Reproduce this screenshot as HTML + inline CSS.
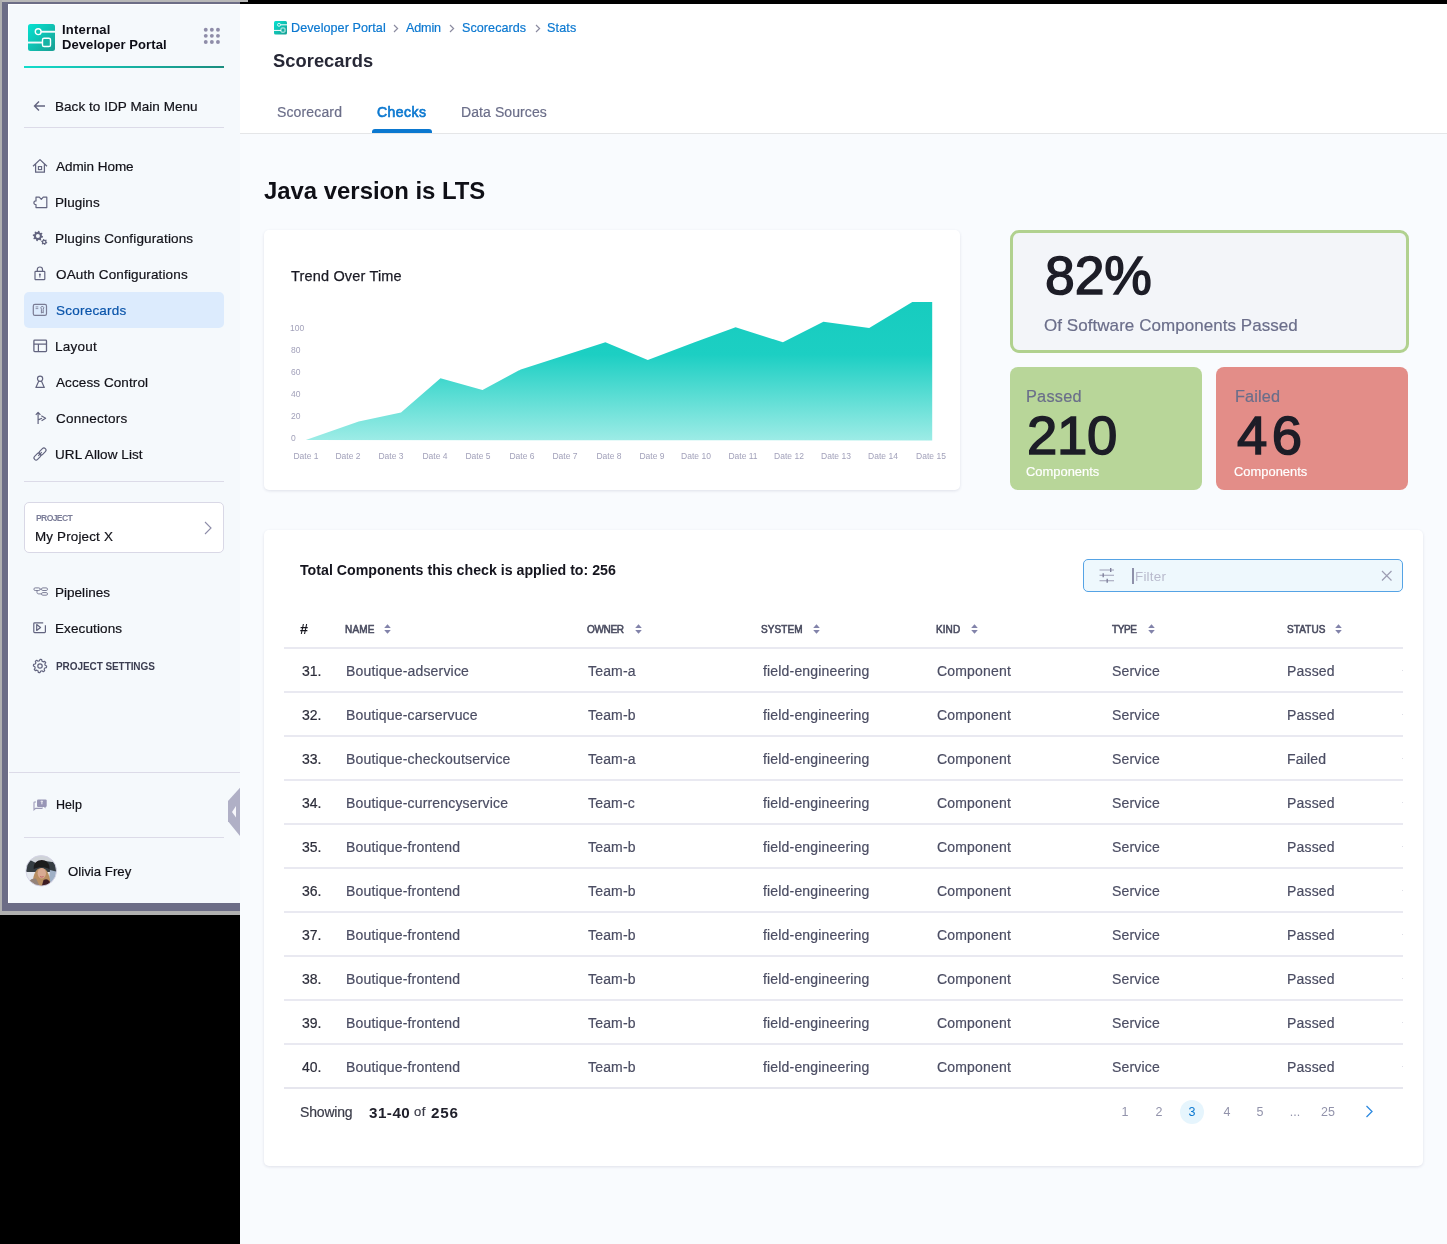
<!DOCTYPE html>
<html><head><meta charset="utf-8"><style>
html,body{margin:0;padding:0}
body{width:1447px;height:1244px;position:relative;overflow:hidden;background:#000;font-family:"Liberation Sans", sans-serif}
.t{position:absolute;white-space:nowrap;will-change:transform}
svg{overflow:visible}
</style></head><body>
<div style="position:absolute;left:0;top:0;width:248px;height:2px;background:#b8b8b8"></div>
<div style="position:absolute;left:0;top:0;width:2px;height:915px;background:#b0b0b0"></div>
<div style="position:absolute;left:2px;top:2px;width:238px;height:909px;background:#6c6d86"></div>
<div style="position:absolute;left:0px;top:911px;width:240px;height:4px;background:#b0b0b0"></div>
<div style="position:absolute;left:8px;top:4px;width:232px;height:899px;background:#ffffff"></div>
<div style="position:absolute;left:9px;top:5px;width:231px;height:898px;background:#f5f9fc"></div>
<div style="position:absolute;left:240px;top:4px;width:1207px;height:1240px;background:#f9fbfe"></div>
<div style="position:absolute;left:240px;top:4px;width:1207px;height:129px;background:#ffffff"></div>
<div style="position:absolute;left:240px;top:133px;width:1207px;height:1px;background:#e5e6e8"></div>
<svg style="position:absolute;left:28px;top:24px" width="27" height="27" viewBox="0 0 27 27"><defs><linearGradient id="lg" x1="0" y1="0" x2="1" y2="1"><stop offset="0" stop-color="#05e3d2"/><stop offset="1" stop-color="#1a9e92"/></linearGradient></defs>
<rect x="0" y="0" width="27" height="27" rx="2.5" fill="url(#lg)"/>
<rect x="10" y="6.8" width="17" height="1.9" fill="#f5f9fc"/>
<rect x="0" y="17.6" width="16" height="1.9" fill="#f5f9fc"/>
<circle cx="10.2" cy="7.7" r="2.9" fill="#12c9b9" stroke="#fff" stroke-width="1.4"/>
<rect x="14.5" y="14.2" width="8" height="8.3" rx="1.6" fill="#17b3a5" stroke="#fff" stroke-width="1.4"/></svg>
<div class="t" style="left:61.63px;top:23.39px;font-size:13px;line-height:13px;color:#0d0d16;font-weight:700;letter-spacing:0.2px;">Internal</div>
<div class="t" style="left:61.63px;top:37.59px;font-size:13px;line-height:13px;color:#0d0d16;font-weight:700;letter-spacing:0.085px;">Developer Portal</div>
<svg style="position:absolute;left:204px;top:28px" width="16" height="16" viewBox="0 0 16 16"><circle cx="1.75" cy="1.75" r="1.95" fill="#8f8da9"/><circle cx="1.75" cy="7.85" r="1.95" fill="#8f8da9"/><circle cx="1.75" cy="13.95" r="1.95" fill="#8f8da9"/><circle cx="7.85" cy="1.75" r="1.95" fill="#8f8da9"/><circle cx="7.85" cy="7.85" r="1.95" fill="#8f8da9"/><circle cx="7.85" cy="13.95" r="1.95" fill="#8f8da9"/><circle cx="13.95" cy="1.75" r="1.95" fill="#8f8da9"/><circle cx="13.95" cy="7.85" r="1.95" fill="#8f8da9"/><circle cx="13.95" cy="13.95" r="1.95" fill="#8f8da9"/></svg>
<svg style="position:absolute;left:24px;top:66px" width="200" height="2" viewBox="0 0 200 2"><defs><linearGradient id="tl"><stop offset="0" stop-color="#12dccb"/><stop offset="1" stop-color="#1b8d7f"/></linearGradient></defs><rect width="200" height="2" fill="url(#tl)"/></svg>
<svg style="position:absolute;left:33px;top:100px" width="13" height="12" viewBox="0 0 13 12"><path d="M6 1.5 L1.5 6 L6 10.5 M1.5 6 H12" fill="none" stroke="#62647f" stroke-width="1.4"/></svg>
<div class="t" style="left:55.39px;top:100.07px;font-size:13.5px;line-height:13.5px;color:#111118;font-weight:400;letter-spacing:0.053px;;-webkit-text-stroke:0.2px #111118">Back to IDP Main Menu</div>
<div style="position:absolute;left:24px;top:127px;width:200px;height:1px;background:#dcdbe8"></div>
<div style="position:absolute;left:24px;top:292px;width:200px;height:36px;background:#dcebfd;border-radius:5px"></div>
<div class="t" style="left:56.47px;top:159.87px;font-size:13.5px;line-height:13.5px;color:#111118;font-weight:400;letter-spacing:-0.047px;;-webkit-text-stroke:0.2px #111118">Admin Home</div>
<div class="t" style="left:55.39px;top:195.87px;font-size:13.5px;line-height:13.5px;color:#111118;font-weight:400;letter-spacing:0.068px;;-webkit-text-stroke:0.2px #111118">Plugins</div>
<div class="t" style="left:55.39px;top:231.87px;font-size:13.5px;line-height:13.5px;color:#111118;font-weight:400;letter-spacing:0.143px;;-webkit-text-stroke:0.2px #111118">Plugins Configurations</div>
<div class="t" style="left:55.86px;top:267.87px;font-size:13.5px;line-height:13.5px;color:#111118;font-weight:400;letter-spacing:0.136px;;-webkit-text-stroke:0.2px #111118">OAuth Configurations</div>
<div class="t" style="left:55.89px;top:303.87px;font-size:13.5px;line-height:13.5px;color:#0a54aa;font-weight:400;letter-spacing:0.224px;;-webkit-text-stroke:0.2px #0a54aa">Scorecards</div>
<div class="t" style="left:55.39px;top:339.87px;font-size:13.5px;line-height:13.5px;color:#111118;font-weight:400;letter-spacing:0.231px;;-webkit-text-stroke:0.2px #111118">Layout</div>
<div class="t" style="left:56.47px;top:375.87px;font-size:13.5px;line-height:13.5px;color:#111118;font-weight:400;letter-spacing:0.094px;;-webkit-text-stroke:0.2px #111118">Access Control</div>
<div class="t" style="left:55.81px;top:411.87px;font-size:13.5px;line-height:13.5px;color:#111118;font-weight:400;letter-spacing:0.237px;;-webkit-text-stroke:0.2px #111118">Connectors</div>
<div class="t" style="left:55.46px;top:447.87px;font-size:13.5px;line-height:13.5px;color:#111118;font-weight:400;letter-spacing:0.084px;;-webkit-text-stroke:0.2px #111118">URL Allow List</div>
<svg style="position:absolute;left:32px;top:158px" width="16" height="16" viewBox="0 0 16 16"><path d="M1 8.2 L8 1.6 L15 8.2 M3.6 6.2 V14.2 H12.4 V6.2" fill="none" stroke="#62647f" stroke-width="1.25" stroke-linejoin="round"/><rect x="6.4" y="8.6" width="3.2" height="3" fill="none" stroke="#62647f" stroke-width="1.1"/></svg>
<svg style="position:absolute;left:33px;top:196px" width="15" height="13" viewBox="0 0 15 13"><path d="M3 1.2 H6.3 L8.3 3.3 L10.2 1.2 H13.8 V11.6 H3 V8.7 C1.6 8.7 0.9 7.9 0.9 6.8 C0.9 5.7 1.6 4.9 3 4.9 Z" fill="none" stroke="#62647f" stroke-width="1.2" stroke-linejoin="round"/></svg>
<svg style="position:absolute;left:32px;top:230px" width="16" height="16" viewBox="0 0 16 16"><polygon points="11.07,6.51 10.88,7.51 9.34,7.84 8.91,8.47 9.20,10.02 8.35,10.59 7.03,9.73 6.28,9.88 5.39,11.17 4.39,10.98 4.06,9.44 3.43,9.01 1.88,9.30 1.31,8.45 2.17,7.13 2.02,6.38 0.73,5.49 0.92,4.49 2.46,4.16 2.89,3.53 2.60,1.98 3.45,1.41 4.77,2.27 5.52,2.12 6.41,0.83 7.41,1.02 7.74,2.56 8.37,2.99 9.92,2.70 10.49,3.55 9.63,4.87 9.78,5.62" fill="#62647f"/><circle cx="5.9" cy="6" r="2.0" fill="#f5f9fc"/><polygon points="15.27,12.40 15.06,13.19 14.02,13.40 13.60,13.82 13.39,14.86 12.60,15.07 11.90,14.28 11.32,14.12 10.31,14.46 9.74,13.89 10.08,12.88 9.92,12.30 9.13,11.60 9.34,10.81 10.38,10.60 10.80,10.18 11.01,9.14 11.80,8.93 12.50,9.72 13.08,9.88 14.09,9.54 14.66,10.11 14.32,11.12 14.48,11.70" fill="#62647f"/><circle cx="12.2" cy="12" r="1.1" fill="#f5f9fc"/></svg>
<svg style="position:absolute;left:34px;top:266px" width="12" height="15" viewBox="0 0 12 15"><rect x="1" y="5.3" width="9.8" height="8.4" rx="0.8" fill="none" stroke="#62647f" stroke-width="1.2"/><path d="M3.3 5.3 V3.6 A2.6 2.6 0 0 1 8.5 3.6 V5.3" fill="none" stroke="#62647f" stroke-width="1.2"/><circle cx="5.9" cy="8.4" r="1" fill="#62647f"/><rect x="5.4" y="8.6" width="1" height="3" fill="#62647f"/></svg>
<svg style="position:absolute;left:32px;top:303px" width="16" height="14" viewBox="0 0 16 14"><rect x="1.3" y="1.3" width="13.2" height="11" rx="1.6" fill="none" stroke="#7a7c94" stroke-width="1.2"/><path d="M3.6 3.9 H6.3 M3.6 5.6 H6.3" stroke="#7a7c94" stroke-width="0.8"/><path d="M10.3 3 L11.7 4.5 L11.2 6.3 V10 L10.3 9.4 L9.4 10 V6.3 L8.9 4.5 Z" fill="none" stroke="#7a7c94" stroke-width="1"/></svg>
<svg style="position:absolute;left:33px;top:339px" width="14" height="14" viewBox="0 0 14 14"><rect x="0.9" y="1.1" width="12.6" height="11.5" rx="0.8" fill="none" stroke="#62647f" stroke-width="1.3"/><path d="M0.9 5.2 H13.5 M5.4 5.2 V12.6" stroke="#62647f" stroke-width="1.2"/></svg>
<svg style="position:absolute;left:35px;top:375px" width="11" height="14" viewBox="0 0 11 14"><circle cx="5.1" cy="3.7" r="2.6" fill="none" stroke="#62647f" stroke-width="1.2"/><path d="M3.8 6 L0.9 12.4 H9.3 L6.4 6" fill="none" stroke="#62647f" stroke-width="1.2" stroke-linejoin="round"/></svg>
<svg style="position:absolute;left:34px;top:411px" width="13" height="14" viewBox="0 0 13 14"><path d="M4.1 13 V2 M1.8 3.9 L4.1 1.4 L6.4 3.9 M4.1 8.9 L8 7.2 M7.3 4.8 L11.6 7.3 L7.6 9.8" fill="none" stroke="#62647f" stroke-width="1.2" stroke-linejoin="round"/></svg>
<svg style="position:absolute;left:33px;top:447px" width="14" height="14" viewBox="0 0 14 14"><g transform="rotate(-45 7 7)"><rect x="-0.6" y="4.9" width="8" height="4.2" rx="2.1" fill="none" stroke="#62647f" stroke-width="1.15"/><rect x="6.6" y="4.9" width="8" height="4.2" rx="2.1" fill="none" stroke="#62647f" stroke-width="1.15"/><path d="M4.5 7 H9.5" stroke="#62647f" stroke-width="1.1"/></g></svg>
<div style="position:absolute;left:24px;top:481px;width:200px;height:1px;background:#dcdbe8"></div>
<div style="position:absolute;left:24px;top:502px;width:198px;height:49px;background:#fff;border:1px solid #d9d8e6;border-radius:5px"></div>
<div class="t" style="left:35.72px;top:514.42px;font-size:8.6px;line-height:8.6px;color:#7b7d98;font-weight:700;letter-spacing:-0.637px;">PROJECT</div>
<div class="t" style="left:35.3px;top:530.45px;font-size:13.4px;line-height:13.4px;color:#111118;font-weight:400;letter-spacing:0.177px;;-webkit-text-stroke:0.2px #111118">My Project X</div>
<svg style="position:absolute;left:203px;top:521px" width="10" height="15" viewBox="0 0 10 15"><path d="M2 1 L8 7 L2 13" fill="none" stroke="#8d8ca8" stroke-width="1.1"/></svg>
<div class="t" style="left:55.39px;top:586.17px;font-size:13.5px;line-height:13.5px;color:#111118;font-weight:400;letter-spacing:0.026px;;-webkit-text-stroke:0.2px #111118">Pipelines</div>
<div class="t" style="left:55.39px;top:621.97px;font-size:13.5px;line-height:13.5px;color:#111118;font-weight:400;letter-spacing:0.106px;;-webkit-text-stroke:0.2px #111118">Executions</div>
<div class="t" style="left:55.63px;top:661.93px;font-size:10px;line-height:10px;color:#3b3d50;font-weight:700;letter-spacing:-0.075px;">PROJECT SETTINGS</div>
<svg style="position:absolute;left:32.6px;top:587.2px" width="16" height="10" viewBox="0 0 16 10"><rect x="0.9" y="0.9" width="6.2" height="2.6" rx="1.3" fill="none" stroke="#7d7f98" stroke-width="1"/><rect x="8.5" y="0.9" width="6" height="2.6" rx="1.3" fill="none" stroke="#7d7f98" stroke-width="1"/><rect x="8.5" y="5.6" width="6" height="2.6" rx="1.3" fill="none" stroke="#7d7f98" stroke-width="1"/><path d="M4 3.5 V5.5 C4 6.6 4.8 6.9 6 6.9 H8.5 M7 2.2 H8.5" fill="none" stroke="#7d7f98" stroke-width="1"/></svg>
<svg style="position:absolute;left:33.4px;top:622px" width="14" height="12" viewBox="0 0 14 12"><path d="M10.2 0.8 H1.6 C1.1 0.8 0.8 1.1 0.8 1.6 V9.8 C0.8 10.3 1.1 10.6 1.6 10.6 H11.6 C12.1 10.6 12.4 10.3 12.4 9.8 V3.3" fill="none" stroke="#62647f" stroke-width="1.2"/><path d="M3.7 2.6 V8.5 L7.6 5.5 Z" fill="none" stroke="#62647f" stroke-width="1.2" stroke-linejoin="round"/></svg>
<svg style="position:absolute;left:33px;top:659px" width="14" height="14" viewBox="0 0 14 14"><polygon points="13.60,7.00 13.54,7.86 13.38,8.71 11.80,8.99 11.50,9.60 11.13,10.17 11.67,11.67 11.02,12.24 10.30,12.72 8.99,11.80 8.35,12.02 7.68,12.16 7.00,13.60 6.14,13.54 5.29,13.38 5.01,11.80 4.40,11.50 3.83,11.13 2.33,11.67 1.76,11.02 1.28,10.30 2.20,8.99 1.98,8.35 1.84,7.68 0.40,7.00 0.46,6.14 0.62,5.29 2.20,5.01 2.50,4.40 2.87,3.83 2.33,2.33 2.98,1.76 3.70,1.28 5.01,2.20 5.65,1.98 6.32,1.84 7.00,0.40 7.86,0.46 8.71,0.62 8.99,2.20 9.60,2.50 10.17,2.87 11.67,2.33 12.24,2.98 12.72,3.70 11.80,5.01 12.02,5.65 12.16,6.32" fill="none" stroke="#62647f" stroke-width="1.2" stroke-linejoin="round"/><circle cx="7" cy="7" r="2.2" fill="none" stroke="#62647f" stroke-width="1.2"/></svg>
<div style="position:absolute;left:9px;top:772px;width:231px;height:1px;background:#dcdbe8"></div>
<svg style="position:absolute;left:33px;top:798px" width="15" height="14" viewBox="0 0 15 14"><path d="M3 4 H1.6 C1.2 4 1 4.3 1 4.7 V11.8 L2.6 10.4 H8.6 C9 10.4 9.3 10.1 9.3 9.7 V9.4" fill="none" stroke="#9d9bb9" stroke-width="1.1"/><rect x="4" y="1.4" width="9.7" height="7.6" rx="1.2" fill="#9896b6"/><path d="M11 9 L12.5 10.5 V8" fill="#9896b6"/><path d="M7.7 3.4 Q8.9 2.9 9.9 3.4 M8.9 3.4 V6.3" stroke="#fff" stroke-width="0.9" fill="none"/></svg>
<div class="t" style="left:55.77px;top:798.92px;font-size:12.5px;line-height:12.5px;color:#111118;font-weight:400;letter-spacing:0.042px;;-webkit-text-stroke:0.2px #111118">Help</div>
<div style="position:absolute;left:24px;top:837px;width:200px;height:1px;background:#dcdbe8"></div>
<svg style="position:absolute;left:227px;top:787px" width="13" height="50" viewBox="0 0 13 50"><path d="M13 0.8 L1 13.9 V34.3 L13 49 Z" fill="#b0b0c6"/><path d="M5 25 L9 19 V30.5 Z" fill="#f7f7fb"/></svg>
<svg style="position:absolute;left:25px;top:855px" width="32" height="32" viewBox="0 0 32 32"><defs><clipPath id="av"><circle cx="16.2" cy="15.8" r="15.2"/></clipPath>
<filter id="bl" x="-0.2" y="-0.2" width="1.4" height="1.4"><feGaussianBlur stdDeviation="0.7"/></filter></defs>
<g clip-path="url(#av)"><g filter="url(#bl)"><rect x="-2" y="-2" width="36" height="36" fill="#cfd3d8"/>
<path d="M-2 8 L5 5 L11 8 L20 6 L27 7 L34 6 V18 H-2 Z" fill="#343c42"/>
<rect x="-2" y="17" width="36" height="8" fill="#e4e8ee"/>
<path d="M25 15 L33 17 V34 H23 Z" fill="#9fb0c6"/>
<path d="M7.5 33 C7.5 22 9.5 13 16.5 13 C23 13 25.5 22 25.5 33 Z" fill="#b98f62"/>
<ellipse cx="16.8" cy="18.3" rx="4.2" ry="5.3" fill="#d9aa92"/>
<path d="M15 21.6 Q16.8 22.6 18.6 21.6" stroke="#c0606a" stroke-width="1" fill="none"/>
<path d="M8.8 14 C7.5 2.5 25.5 1.5 24.5 14 C20.5 11.8 12.8 11.8 8.8 14 Z" fill="#1f1a1c"/>
<path d="M1 34 C2 26 6 23 11 23.5 L16 34 Z" fill="#948378"/>
<path d="M16 34 L18.5 25 C21.5 23.5 24 24.5 25 28 L24 34 Z" fill="#3e1c24"/>
</g></g><circle cx="16.2" cy="15.8" r="15.3" fill="none" stroke="#d4d2e4" stroke-width="0.9"/></svg>
<div class="t" style="left:68.17px;top:865.12px;font-size:13.2px;line-height:13.2px;color:#111118;font-weight:400;letter-spacing:0.023px;;-webkit-text-stroke:0.2px #111118">Olivia Frey</div>
<svg style="position:absolute;left:274px;top:21px" width="13" height="13.5" viewBox="0 0 13 13.5"><defs><linearGradient id="lg2" x1="0" y1="0" x2="1" y2="1"><stop offset="0" stop-color="#05e3d2"/><stop offset="1" stop-color="#1a9e92"/></linearGradient></defs>
<rect width="13" height="13.5" rx="1.5" fill="url(#lg2)"/><rect x="5" y="3.3" width="8" height="1" fill="#fff"/><rect x="0" y="8.9" width="8" height="1" fill="#fff"/>
<circle cx="5" cy="3.8" r="1.5" fill="#12c9b9" stroke="#fff" stroke-width="0.8"/><rect x="7" y="7" width="4" height="4.2" rx="0.8" fill="#17b3a5" stroke="#fff" stroke-width="0.8"/></svg>
<div class="t" style="left:290.67px;top:22.03px;font-size:12.6px;line-height:12.6px;color:#0b78d0;font-weight:400;letter-spacing:0.059px;;-webkit-text-stroke:0.2px #0b78d0">Developer Portal</div>
<div class="t" style="left:406.28px;top:22.03px;font-size:12.6px;line-height:12.6px;color:#0b78d0;font-weight:400;letter-spacing:-0.144px;;-webkit-text-stroke:0.2px #0b78d0">Admin</div>
<div class="t" style="left:461.83px;top:22.03px;font-size:12.6px;line-height:12.6px;color:#0b78d0;font-weight:400;letter-spacing:0.047px;;-webkit-text-stroke:0.2px #0b78d0">Scorecards</div>
<div class="t" style="left:546.73px;top:22.03px;font-size:12.6px;line-height:12.6px;color:#0b78d0;font-weight:400;letter-spacing:0.143px;;-webkit-text-stroke:0.2px #0b78d0">Stats</div>
<svg style="position:absolute;left:393.2px;top:23.5px" width="6" height="9" viewBox="0 0 6 9"><path d="M1 1 L4.6 4.5 L1 8" fill="none" stroke="#8b8ba0" stroke-width="1.2"/></svg>
<svg style="position:absolute;left:449.4px;top:23.5px" width="6" height="9" viewBox="0 0 6 9"><path d="M1 1 L4.6 4.5 L1 8" fill="none" stroke="#8b8ba0" stroke-width="1.2"/></svg>
<svg style="position:absolute;left:534.7px;top:23.5px" width="6" height="9" viewBox="0 0 6 9"><path d="M1 1 L4.6 4.5 L1 8" fill="none" stroke="#8b8ba0" stroke-width="1.2"/></svg>
<div class="t" style="left:272.97px;top:52.11px;font-size:18.3px;line-height:18.3px;color:#272836;font-weight:700;letter-spacing:0.059px;">Scorecards</div>
<div class="t" style="left:276.76px;top:104.75px;font-size:14px;line-height:14px;color:#6b6e89;font-weight:400;letter-spacing:0.142px;;-webkit-text-stroke:0.2px #6b6e89">Scorecard</div>
<div class="t" style="left:377.29px;top:104.75px;font-size:14px;line-height:14px;color:#0b78d0;font-weight:400;letter-spacing:0.462px;-webkit-text-stroke:0.65px #0b78d0">Checks</div>
<div class="t" style="left:461.25px;top:104.75px;font-size:14px;line-height:14px;color:#6b6e89;font-weight:400;letter-spacing:0.086px;;-webkit-text-stroke:0.2px #6b6e89">Data Sources</div>
<div style="position:absolute;left:372px;top:129px;width:60px;height:4px;background:#0b78d0;border-radius:3px 3px 0 0"></div>
<div class="t" style="left:264.14px;top:179.36px;font-size:23.9px;line-height:23.9px;color:#0f0f16;font-weight:700;letter-spacing:-0.002px;">Java version is LTS</div>
<div style="position:absolute;left:264px;top:230px;width:696px;height:260px;background:#fff;border-radius:5px;box-shadow:0 1px 3px rgba(40,40,90,0.12)"></div>
<div class="t" style="left:291.27px;top:268.92px;font-size:14.5px;line-height:14.5px;color:#1a1a24;font-weight:400;letter-spacing:0.17px;-webkit-text-stroke:0.25px #1a1a24">Trend Over Time</div>
<div class="t" style="left:290.35px;top:324.00px;font-size:8.5px;line-height:8.5px;color:#a2a1ba;font-weight:400;letter-spacing:0px;">100</div>
<div class="t" style="left:290.63px;top:346.00px;font-size:8.5px;line-height:8.5px;color:#a2a1ba;font-weight:400;letter-spacing:0px;">80</div>
<div class="t" style="left:290.57px;top:368.00px;font-size:8.5px;line-height:8.5px;color:#a2a1ba;font-weight:400;letter-spacing:0px;">60</div>
<div class="t" style="left:290.8px;top:390.00px;font-size:8.5px;line-height:8.5px;color:#a2a1ba;font-weight:400;letter-spacing:0px;">40</div>
<div class="t" style="left:290.57px;top:412.00px;font-size:8.5px;line-height:8.5px;color:#a2a1ba;font-weight:400;letter-spacing:0px;">20</div>
<div class="t" style="left:290.67px;top:434.00px;font-size:8.5px;line-height:8.5px;color:#a2a1ba;font-weight:400;letter-spacing:0px;">0</div>
<svg style="position:absolute;left:264px;top:230px" width="696" height="260" viewBox="0 0 696 260"><defs><linearGradient id="ag" x1="0" y1="0" x2="0" y2="1" gradientUnits="objectBoundingBox"><stop offset="0" stop-color="#17ccbf"/><stop offset="0.38" stop-color="#1ccfc3"/><stop offset="1" stop-color="#9decE6"/></linearGradient></defs><polygon points="41.8,210.0 94.7,191.6 137.0,182.6 176.5,148.3 218.5,160.1 256.8,139.4 341.4,112.2 383.8,130.1 430.6,112.2 471.6,97.3 518.9,112.2 559.4,91.8 605.2,98.0 648.3,71.9 668.2,71.9 668.2,210.4" fill="url(#ag)"/></svg>
<div class="t" style="left:293.8px;top:451.90px;font-size:8.5px;line-height:8.5px;color:#a2a1ba;font-weight:400;letter-spacing:0px;width:24px;text-align:center;white-space:nowrap;display:flex;justify-content:center">Date 1</div>
<div class="t" style="left:336.3px;top:451.90px;font-size:8.5px;line-height:8.5px;color:#a2a1ba;font-weight:400;letter-spacing:0px;width:24px;text-align:center;white-space:nowrap;display:flex;justify-content:center">Date 2</div>
<div class="t" style="left:379px;top:451.90px;font-size:8.5px;line-height:8.5px;color:#a2a1ba;font-weight:400;letter-spacing:0px;width:24px;text-align:center;white-space:nowrap;display:flex;justify-content:center">Date 3</div>
<div class="t" style="left:422.8px;top:451.90px;font-size:8.5px;line-height:8.5px;color:#a2a1ba;font-weight:400;letter-spacing:0px;width:24px;text-align:center;white-space:nowrap;display:flex;justify-content:center">Date 4</div>
<div class="t" style="left:466.3px;top:451.90px;font-size:8.5px;line-height:8.5px;color:#a2a1ba;font-weight:400;letter-spacing:0px;width:24px;text-align:center;white-space:nowrap;display:flex;justify-content:center">Date 5</div>
<div class="t" style="left:509.8px;top:451.90px;font-size:8.5px;line-height:8.5px;color:#a2a1ba;font-weight:400;letter-spacing:0px;width:24px;text-align:center;white-space:nowrap;display:flex;justify-content:center">Date 6</div>
<div class="t" style="left:553.4px;top:451.90px;font-size:8.5px;line-height:8.5px;color:#a2a1ba;font-weight:400;letter-spacing:0px;width:24px;text-align:center;white-space:nowrap;display:flex;justify-content:center">Date 7</div>
<div class="t" style="left:596.9px;top:451.90px;font-size:8.5px;line-height:8.5px;color:#a2a1ba;font-weight:400;letter-spacing:0px;width:24px;text-align:center;white-space:nowrap;display:flex;justify-content:center">Date 8</div>
<div class="t" style="left:639.7px;top:451.90px;font-size:8.5px;line-height:8.5px;color:#a2a1ba;font-weight:400;letter-spacing:0px;width:24px;text-align:center;white-space:nowrap;display:flex;justify-content:center">Date 9</div>
<div class="t" style="left:683.5px;top:451.90px;font-size:8.5px;line-height:8.5px;color:#a2a1ba;font-weight:400;letter-spacing:0px;width:24px;text-align:center;white-space:nowrap;display:flex;justify-content:center">Date 10</div>
<div class="t" style="left:731.4px;top:451.90px;font-size:8.5px;line-height:8.5px;color:#a2a1ba;font-weight:400;letter-spacing:0px;width:24px;text-align:center;white-space:nowrap;display:flex;justify-content:center">Date 11</div>
<div class="t" style="left:777.4px;top:451.90px;font-size:8.5px;line-height:8.5px;color:#a2a1ba;font-weight:400;letter-spacing:0px;width:24px;text-align:center;white-space:nowrap;display:flex;justify-content:center">Date 12</div>
<div class="t" style="left:824.2px;top:451.90px;font-size:8.5px;line-height:8.5px;color:#a2a1ba;font-weight:400;letter-spacing:0px;width:24px;text-align:center;white-space:nowrap;display:flex;justify-content:center">Date 13</div>
<div class="t" style="left:870.6px;top:451.90px;font-size:8.5px;line-height:8.5px;color:#a2a1ba;font-weight:400;letter-spacing:0px;width:24px;text-align:center;white-space:nowrap;display:flex;justify-content:center">Date 14</div>
<div class="t" style="left:918.5px;top:451.90px;font-size:8.5px;line-height:8.5px;color:#a2a1ba;font-weight:400;letter-spacing:0px;width:24px;text-align:center;white-space:nowrap;display:flex;justify-content:center">Date 15</div>
<div style="position:absolute;left:1010px;top:230px;width:399px;height:123px;box-sizing:border-box;background:#f3f5f9;border:3px solid #b1d18f;border-radius:9px"></div>
<div class="t" style="left:1044.9px;top:249.20px;font-size:53.5px;line-height:53.5px;color:#1d1d27;font-weight:400;letter-spacing:-0.1px;-webkit-text-stroke:1.45px #1d1d27">82%</div>
<div class="t" style="left:1044.29px;top:317.21px;font-size:17px;line-height:17px;color:#6b6e8a;font-weight:400;letter-spacing:0.054px;;-webkit-text-stroke:0.2px #6b6e8a">Of Software Components Passed</div>
<div style="position:absolute;left:1010px;top:367px;width:192px;height:123px;background:#b8d699;border-radius:8px"></div>
<div style="position:absolute;left:1216px;top:367px;width:192px;height:123px;background:#e38d88;border-radius:8px"></div>
<div class="t" style="left:1025.66px;top:387.50px;font-size:16.3px;line-height:16.3px;color:#6a6e8a;font-weight:400;letter-spacing:0.257px;;-webkit-text-stroke:0.2px #6a6e8a">Passed</div>
<div class="t" style="left:1234.56px;top:387.50px;font-size:16.3px;line-height:16.3px;color:#6a6e8a;font-weight:400;letter-spacing:0.15px;;-webkit-text-stroke:0.2px #6a6e8a">Failed</div>
<div class="t" style="left:1027px;top:409.05px;font-size:54.5px;line-height:54.5px;color:#1d1d27;font-weight:400;letter-spacing:-0.3px;-webkit-text-stroke:1.5px #1d1d27">210</div>
<div class="t" style="left:1236.7px;top:409.05px;font-size:54.5px;line-height:54.5px;color:#1d1d27;font-weight:400;letter-spacing:4.4px;-webkit-text-stroke:1.5px #1d1d27">46</div>
<div class="t" style="left:1025.94px;top:465.98px;font-size:12.9px;line-height:12.9px;color:#ffffff;font-weight:400;letter-spacing:0.023px;-webkit-text-stroke:0.2px #fff">Components</div>
<div class="t" style="left:1234.44px;top:465.98px;font-size:12.9px;line-height:12.9px;color:#ffffff;font-weight:400;letter-spacing:0.023px;-webkit-text-stroke:0.2px #fff">Components</div>
<div style="position:absolute;left:264px;top:530px;width:1159px;height:636px;background:#fff;border-radius:5px;box-shadow:0 1px 3px rgba(40,40,90,0.12)"></div>
<div class="t" style="left:300.44px;top:562.88px;font-size:14.2px;line-height:14.2px;color:#15151e;font-weight:700;letter-spacing:0.0px;">Total Components this check is applied to: 256</div>
<div style="position:absolute;left:1083px;top:559px;width:320px;height:33px;box-sizing:border-box;background:#eef8fd;border:1.8px solid #55a3e5;border-radius:5px"></div>
<svg style="position:absolute;left:1099px;top:567px" width="16" height="17" viewBox="0 0 16 17"><path d="M0.5 3 H15 M0.5 8.3 H15 M0.5 13.8 H15" stroke="#9e9fb7" stroke-width="1.1"/><path d="M11.7 1 V5 M4.2 6.3 V10.3 M8.2 11.8 V15.8" stroke="#7f819c" stroke-width="1.4"/></svg>
<div style="position:absolute;left:1132.3px;top:568px;width:2px;height:15.5px;background:#8f91aa"></div>
<div class="t" style="left:1134.9px;top:569.95px;font-size:13.4px;line-height:13.4px;color:#b9bacd;font-weight:400;letter-spacing:0.22px;">Filter</div>
<svg style="position:absolute;left:1381px;top:570px" width="12" height="12" viewBox="0 0 12 12"><path d="M1 1 L10.5 10.5 M10.5 1 L1 10.5" stroke="#9c9db2" stroke-width="1.2"/></svg>
<div class="t" style="left:300.46px;top:622.19px;font-size:14.3px;line-height:14.3px;color:#15151e;font-weight:700;letter-spacing:0px;">#</div>
<div class="t" style="left:345.18px;top:624.63px;font-size:10px;line-height:10px;color:#4a4c60;font-weight:400;letter-spacing:0.207px;-webkit-text-stroke:0.55px #4a4c60">NAME</div>
<svg style="position:absolute;left:384.3px;top:624.3px" width="8" height="10" viewBox="0 0 8 10"><path d="M3.5 0.3 L6.8 4.1 H0.2 Z M3.5 9.7 L6.8 5.9 H0.2 Z" fill="#8283aa"/></svg>
<div class="t" style="left:586.53px;top:624.63px;font-size:10px;line-height:10px;color:#4a4c60;font-weight:400;letter-spacing:-0.319px;-webkit-text-stroke:0.55px #4a4c60">OWNER</div>
<svg style="position:absolute;left:634.5px;top:624.3px" width="8" height="10" viewBox="0 0 8 10"><path d="M3.5 0.3 L6.8 4.1 H0.2 Z M3.5 9.7 L6.8 5.9 H0.2 Z" fill="#8283aa"/></svg>
<div class="t" style="left:761.45px;top:624.63px;font-size:10px;line-height:10px;color:#4a4c60;font-weight:400;letter-spacing:0.071px;-webkit-text-stroke:0.55px #4a4c60">SYSTEM</div>
<svg style="position:absolute;left:812.5px;top:624.3px" width="8" height="10" viewBox="0 0 8 10"><path d="M3.5 0.3 L6.8 4.1 H0.2 Z M3.5 9.7 L6.8 5.9 H0.2 Z" fill="#8283aa"/></svg>
<div class="t" style="left:935.98px;top:624.63px;font-size:10px;line-height:10px;color:#4a4c60;font-weight:400;letter-spacing:0.073px;-webkit-text-stroke:0.55px #4a4c60">KIND</div>
<svg style="position:absolute;left:970.6px;top:624.3px" width="8" height="10" viewBox="0 0 8 10"><path d="M3.5 0.3 L6.8 4.1 H0.2 Z M3.5 9.7 L6.8 5.9 H0.2 Z" fill="#8283aa"/></svg>
<div class="t" style="left:1111.78px;top:624.63px;font-size:10px;line-height:10px;color:#4a4c60;font-weight:400;letter-spacing:-0.358px;-webkit-text-stroke:0.55px #4a4c60">TYPE</div>
<svg style="position:absolute;left:1148.2px;top:624.3px" width="8" height="10" viewBox="0 0 8 10"><path d="M3.5 0.3 L6.8 4.1 H0.2 Z M3.5 9.7 L6.8 5.9 H0.2 Z" fill="#8283aa"/></svg>
<div class="t" style="left:1286.55px;top:624.63px;font-size:10px;line-height:10px;color:#4a4c60;font-weight:400;letter-spacing:0.101px;-webkit-text-stroke:0.55px #4a4c60">STATUS</div>
<svg style="position:absolute;left:1335.4px;top:624.3px" width="8" height="10" viewBox="0 0 8 10"><path d="M3.5 0.3 L6.8 4.1 H0.2 Z M3.5 9.7 L6.8 5.9 H0.2 Z" fill="#8283aa"/></svg>
<div style="position:absolute;left:284px;top:647px;width:1119px;height:2px;background:#e9e9f1"></div>
<div class="t" style="left:301.57px;top:664.15px;font-size:14px;line-height:14px;color:#2c2d3a;font-weight:400;letter-spacing:0px;;-webkit-text-stroke:0.2px #2c2d3a">31.</div>
<div class="t" style="left:345.85px;top:664.15px;font-size:14px;line-height:14px;color:#4b4d63;font-weight:400;letter-spacing:0.176px;;-webkit-text-stroke:0.2px #4b4d63">Boutique-adservice</div>
<div class="t" style="left:587.69px;top:664.15px;font-size:14px;line-height:14px;color:#4b4d63;font-weight:400;letter-spacing:0.176px;;-webkit-text-stroke:0.2px #4b4d63">Team-a</div>
<div class="t" style="left:762.6px;top:664.15px;font-size:14px;line-height:14px;color:#4b4d63;font-weight:400;letter-spacing:0.176px;;-webkit-text-stroke:0.2px #4b4d63">field-engineering</div>
<div class="t" style="left:937.29px;top:664.15px;font-size:14px;line-height:14px;color:#4b4d63;font-weight:400;letter-spacing:0.176px;;-webkit-text-stroke:0.2px #4b4d63">Component</div>
<div class="t" style="left:1112.36px;top:664.15px;font-size:14px;line-height:14px;color:#4b4d63;font-weight:400;letter-spacing:0.176px;;-webkit-text-stroke:0.2px #4b4d63">Service</div>
<div class="t" style="left:1286.85px;top:664.15px;font-size:14px;line-height:14px;color:#4b4d63;font-weight:400;letter-spacing:0.176px;;-webkit-text-stroke:0.2px #4b4d63">Passed</div>
<div style="position:absolute;left:1402px;top:670.4px;width:1px;height:1px;background:#dedee6"></div>
<div style="position:absolute;left:284px;top:691px;width:1119px;height:2px;background:#e9e9f1"></div>
<div class="t" style="left:301.57px;top:708.15px;font-size:14px;line-height:14px;color:#2c2d3a;font-weight:400;letter-spacing:0px;;-webkit-text-stroke:0.2px #2c2d3a">32.</div>
<div class="t" style="left:345.85px;top:708.15px;font-size:14px;line-height:14px;color:#4b4d63;font-weight:400;letter-spacing:0.176px;;-webkit-text-stroke:0.2px #4b4d63">Boutique-carservuce</div>
<div class="t" style="left:587.69px;top:708.15px;font-size:14px;line-height:14px;color:#4b4d63;font-weight:400;letter-spacing:0.176px;;-webkit-text-stroke:0.2px #4b4d63">Team-b</div>
<div class="t" style="left:762.6px;top:708.15px;font-size:14px;line-height:14px;color:#4b4d63;font-weight:400;letter-spacing:0.176px;;-webkit-text-stroke:0.2px #4b4d63">field-engineering</div>
<div class="t" style="left:937.29px;top:708.15px;font-size:14px;line-height:14px;color:#4b4d63;font-weight:400;letter-spacing:0.176px;;-webkit-text-stroke:0.2px #4b4d63">Component</div>
<div class="t" style="left:1112.36px;top:708.15px;font-size:14px;line-height:14px;color:#4b4d63;font-weight:400;letter-spacing:0.176px;;-webkit-text-stroke:0.2px #4b4d63">Service</div>
<div class="t" style="left:1286.85px;top:708.15px;font-size:14px;line-height:14px;color:#4b4d63;font-weight:400;letter-spacing:0.176px;;-webkit-text-stroke:0.2px #4b4d63">Passed</div>
<div style="position:absolute;left:1402px;top:714.4px;width:1px;height:1px;background:#dedee6"></div>
<div style="position:absolute;left:284px;top:735px;width:1119px;height:2px;background:#e9e9f1"></div>
<div class="t" style="left:301.57px;top:752.15px;font-size:14px;line-height:14px;color:#2c2d3a;font-weight:400;letter-spacing:0px;;-webkit-text-stroke:0.2px #2c2d3a">33.</div>
<div class="t" style="left:345.85px;top:752.15px;font-size:14px;line-height:14px;color:#4b4d63;font-weight:400;letter-spacing:0.176px;;-webkit-text-stroke:0.2px #4b4d63">Boutique-checkoutservice</div>
<div class="t" style="left:587.69px;top:752.15px;font-size:14px;line-height:14px;color:#4b4d63;font-weight:400;letter-spacing:0.176px;;-webkit-text-stroke:0.2px #4b4d63">Team-a</div>
<div class="t" style="left:762.6px;top:752.15px;font-size:14px;line-height:14px;color:#4b4d63;font-weight:400;letter-spacing:0.176px;;-webkit-text-stroke:0.2px #4b4d63">field-engineering</div>
<div class="t" style="left:937.29px;top:752.15px;font-size:14px;line-height:14px;color:#4b4d63;font-weight:400;letter-spacing:0.176px;;-webkit-text-stroke:0.2px #4b4d63">Component</div>
<div class="t" style="left:1112.36px;top:752.15px;font-size:14px;line-height:14px;color:#4b4d63;font-weight:400;letter-spacing:0.176px;;-webkit-text-stroke:0.2px #4b4d63">Service</div>
<div class="t" style="left:1286.85px;top:752.15px;font-size:14px;line-height:14px;color:#4b4d63;font-weight:400;letter-spacing:0.176px;;-webkit-text-stroke:0.2px #4b4d63">Failed</div>
<div style="position:absolute;left:1402px;top:758.4px;width:1px;height:1px;background:#dedee6"></div>
<div style="position:absolute;left:284px;top:779px;width:1119px;height:2px;background:#e9e9f1"></div>
<div class="t" style="left:301.57px;top:796.15px;font-size:14px;line-height:14px;color:#2c2d3a;font-weight:400;letter-spacing:0px;;-webkit-text-stroke:0.2px #2c2d3a">34.</div>
<div class="t" style="left:345.85px;top:796.15px;font-size:14px;line-height:14px;color:#4b4d63;font-weight:400;letter-spacing:0.176px;;-webkit-text-stroke:0.2px #4b4d63">Boutique-currencyservice</div>
<div class="t" style="left:587.69px;top:796.15px;font-size:14px;line-height:14px;color:#4b4d63;font-weight:400;letter-spacing:0.176px;;-webkit-text-stroke:0.2px #4b4d63">Team-c</div>
<div class="t" style="left:762.6px;top:796.15px;font-size:14px;line-height:14px;color:#4b4d63;font-weight:400;letter-spacing:0.176px;;-webkit-text-stroke:0.2px #4b4d63">field-engineering</div>
<div class="t" style="left:937.29px;top:796.15px;font-size:14px;line-height:14px;color:#4b4d63;font-weight:400;letter-spacing:0.176px;;-webkit-text-stroke:0.2px #4b4d63">Component</div>
<div class="t" style="left:1112.36px;top:796.15px;font-size:14px;line-height:14px;color:#4b4d63;font-weight:400;letter-spacing:0.176px;;-webkit-text-stroke:0.2px #4b4d63">Service</div>
<div class="t" style="left:1286.85px;top:796.15px;font-size:14px;line-height:14px;color:#4b4d63;font-weight:400;letter-spacing:0.176px;;-webkit-text-stroke:0.2px #4b4d63">Passed</div>
<div style="position:absolute;left:1402px;top:802.4px;width:1px;height:1px;background:#dedee6"></div>
<div style="position:absolute;left:284px;top:823px;width:1119px;height:2px;background:#e9e9f1"></div>
<div class="t" style="left:301.57px;top:840.15px;font-size:14px;line-height:14px;color:#2c2d3a;font-weight:400;letter-spacing:0px;;-webkit-text-stroke:0.2px #2c2d3a">35.</div>
<div class="t" style="left:345.85px;top:840.15px;font-size:14px;line-height:14px;color:#4b4d63;font-weight:400;letter-spacing:0.176px;;-webkit-text-stroke:0.2px #4b4d63">Boutique-frontend</div>
<div class="t" style="left:587.69px;top:840.15px;font-size:14px;line-height:14px;color:#4b4d63;font-weight:400;letter-spacing:0.176px;;-webkit-text-stroke:0.2px #4b4d63">Team-b</div>
<div class="t" style="left:762.6px;top:840.15px;font-size:14px;line-height:14px;color:#4b4d63;font-weight:400;letter-spacing:0.176px;;-webkit-text-stroke:0.2px #4b4d63">field-engineering</div>
<div class="t" style="left:937.29px;top:840.15px;font-size:14px;line-height:14px;color:#4b4d63;font-weight:400;letter-spacing:0.176px;;-webkit-text-stroke:0.2px #4b4d63">Component</div>
<div class="t" style="left:1112.36px;top:840.15px;font-size:14px;line-height:14px;color:#4b4d63;font-weight:400;letter-spacing:0.176px;;-webkit-text-stroke:0.2px #4b4d63">Service</div>
<div class="t" style="left:1286.85px;top:840.15px;font-size:14px;line-height:14px;color:#4b4d63;font-weight:400;letter-spacing:0.176px;;-webkit-text-stroke:0.2px #4b4d63">Passed</div>
<div style="position:absolute;left:1402px;top:846.4px;width:1px;height:1px;background:#dedee6"></div>
<div style="position:absolute;left:284px;top:867px;width:1119px;height:2px;background:#e9e9f1"></div>
<div class="t" style="left:301.57px;top:884.15px;font-size:14px;line-height:14px;color:#2c2d3a;font-weight:400;letter-spacing:0px;;-webkit-text-stroke:0.2px #2c2d3a">36.</div>
<div class="t" style="left:345.85px;top:884.15px;font-size:14px;line-height:14px;color:#4b4d63;font-weight:400;letter-spacing:0.176px;;-webkit-text-stroke:0.2px #4b4d63">Boutique-frontend</div>
<div class="t" style="left:587.69px;top:884.15px;font-size:14px;line-height:14px;color:#4b4d63;font-weight:400;letter-spacing:0.176px;;-webkit-text-stroke:0.2px #4b4d63">Team-b</div>
<div class="t" style="left:762.6px;top:884.15px;font-size:14px;line-height:14px;color:#4b4d63;font-weight:400;letter-spacing:0.176px;;-webkit-text-stroke:0.2px #4b4d63">field-engineering</div>
<div class="t" style="left:937.29px;top:884.15px;font-size:14px;line-height:14px;color:#4b4d63;font-weight:400;letter-spacing:0.176px;;-webkit-text-stroke:0.2px #4b4d63">Component</div>
<div class="t" style="left:1112.36px;top:884.15px;font-size:14px;line-height:14px;color:#4b4d63;font-weight:400;letter-spacing:0.176px;;-webkit-text-stroke:0.2px #4b4d63">Service</div>
<div class="t" style="left:1286.85px;top:884.15px;font-size:14px;line-height:14px;color:#4b4d63;font-weight:400;letter-spacing:0.176px;;-webkit-text-stroke:0.2px #4b4d63">Passed</div>
<div style="position:absolute;left:1402px;top:890.4px;width:1px;height:1px;background:#dedee6"></div>
<div style="position:absolute;left:284px;top:911px;width:1119px;height:2px;background:#e9e9f1"></div>
<div class="t" style="left:301.57px;top:928.15px;font-size:14px;line-height:14px;color:#2c2d3a;font-weight:400;letter-spacing:0px;;-webkit-text-stroke:0.2px #2c2d3a">37.</div>
<div class="t" style="left:345.85px;top:928.15px;font-size:14px;line-height:14px;color:#4b4d63;font-weight:400;letter-spacing:0.176px;;-webkit-text-stroke:0.2px #4b4d63">Boutique-frontend</div>
<div class="t" style="left:587.69px;top:928.15px;font-size:14px;line-height:14px;color:#4b4d63;font-weight:400;letter-spacing:0.176px;;-webkit-text-stroke:0.2px #4b4d63">Team-b</div>
<div class="t" style="left:762.6px;top:928.15px;font-size:14px;line-height:14px;color:#4b4d63;font-weight:400;letter-spacing:0.176px;;-webkit-text-stroke:0.2px #4b4d63">field-engineering</div>
<div class="t" style="left:937.29px;top:928.15px;font-size:14px;line-height:14px;color:#4b4d63;font-weight:400;letter-spacing:0.176px;;-webkit-text-stroke:0.2px #4b4d63">Component</div>
<div class="t" style="left:1112.36px;top:928.15px;font-size:14px;line-height:14px;color:#4b4d63;font-weight:400;letter-spacing:0.176px;;-webkit-text-stroke:0.2px #4b4d63">Service</div>
<div class="t" style="left:1286.85px;top:928.15px;font-size:14px;line-height:14px;color:#4b4d63;font-weight:400;letter-spacing:0.176px;;-webkit-text-stroke:0.2px #4b4d63">Passed</div>
<div style="position:absolute;left:1402px;top:934.4px;width:1px;height:1px;background:#dedee6"></div>
<div style="position:absolute;left:284px;top:955px;width:1119px;height:2px;background:#e9e9f1"></div>
<div class="t" style="left:301.57px;top:972.15px;font-size:14px;line-height:14px;color:#2c2d3a;font-weight:400;letter-spacing:0px;;-webkit-text-stroke:0.2px #2c2d3a">38.</div>
<div class="t" style="left:345.85px;top:972.15px;font-size:14px;line-height:14px;color:#4b4d63;font-weight:400;letter-spacing:0.176px;;-webkit-text-stroke:0.2px #4b4d63">Boutique-frontend</div>
<div class="t" style="left:587.69px;top:972.15px;font-size:14px;line-height:14px;color:#4b4d63;font-weight:400;letter-spacing:0.176px;;-webkit-text-stroke:0.2px #4b4d63">Team-b</div>
<div class="t" style="left:762.6px;top:972.15px;font-size:14px;line-height:14px;color:#4b4d63;font-weight:400;letter-spacing:0.176px;;-webkit-text-stroke:0.2px #4b4d63">field-engineering</div>
<div class="t" style="left:937.29px;top:972.15px;font-size:14px;line-height:14px;color:#4b4d63;font-weight:400;letter-spacing:0.176px;;-webkit-text-stroke:0.2px #4b4d63">Component</div>
<div class="t" style="left:1112.36px;top:972.15px;font-size:14px;line-height:14px;color:#4b4d63;font-weight:400;letter-spacing:0.176px;;-webkit-text-stroke:0.2px #4b4d63">Service</div>
<div class="t" style="left:1286.85px;top:972.15px;font-size:14px;line-height:14px;color:#4b4d63;font-weight:400;letter-spacing:0.176px;;-webkit-text-stroke:0.2px #4b4d63">Passed</div>
<div style="position:absolute;left:1402px;top:978.4px;width:1px;height:1px;background:#dedee6"></div>
<div style="position:absolute;left:284px;top:999px;width:1119px;height:2px;background:#e9e9f1"></div>
<div class="t" style="left:301.57px;top:1016.15px;font-size:14px;line-height:14px;color:#2c2d3a;font-weight:400;letter-spacing:0px;;-webkit-text-stroke:0.2px #2c2d3a">39.</div>
<div class="t" style="left:345.85px;top:1016.15px;font-size:14px;line-height:14px;color:#4b4d63;font-weight:400;letter-spacing:0.176px;;-webkit-text-stroke:0.2px #4b4d63">Boutique-frontend</div>
<div class="t" style="left:587.69px;top:1016.15px;font-size:14px;line-height:14px;color:#4b4d63;font-weight:400;letter-spacing:0.176px;;-webkit-text-stroke:0.2px #4b4d63">Team-b</div>
<div class="t" style="left:762.6px;top:1016.15px;font-size:14px;line-height:14px;color:#4b4d63;font-weight:400;letter-spacing:0.176px;;-webkit-text-stroke:0.2px #4b4d63">field-engineering</div>
<div class="t" style="left:937.29px;top:1016.15px;font-size:14px;line-height:14px;color:#4b4d63;font-weight:400;letter-spacing:0.176px;;-webkit-text-stroke:0.2px #4b4d63">Component</div>
<div class="t" style="left:1112.36px;top:1016.15px;font-size:14px;line-height:14px;color:#4b4d63;font-weight:400;letter-spacing:0.176px;;-webkit-text-stroke:0.2px #4b4d63">Service</div>
<div class="t" style="left:1286.85px;top:1016.15px;font-size:14px;line-height:14px;color:#4b4d63;font-weight:400;letter-spacing:0.176px;;-webkit-text-stroke:0.2px #4b4d63">Passed</div>
<div style="position:absolute;left:1402px;top:1022.4000000000001px;width:1px;height:1px;background:#dedee6"></div>
<div style="position:absolute;left:284px;top:1043px;width:1119px;height:2px;background:#e9e9f1"></div>
<div class="t" style="left:301.78px;top:1060.15px;font-size:14px;line-height:14px;color:#2c2d3a;font-weight:400;letter-spacing:0px;;-webkit-text-stroke:0.2px #2c2d3a">40.</div>
<div class="t" style="left:345.85px;top:1060.15px;font-size:14px;line-height:14px;color:#4b4d63;font-weight:400;letter-spacing:0.176px;;-webkit-text-stroke:0.2px #4b4d63">Boutique-frontend</div>
<div class="t" style="left:587.69px;top:1060.15px;font-size:14px;line-height:14px;color:#4b4d63;font-weight:400;letter-spacing:0.176px;;-webkit-text-stroke:0.2px #4b4d63">Team-b</div>
<div class="t" style="left:762.6px;top:1060.15px;font-size:14px;line-height:14px;color:#4b4d63;font-weight:400;letter-spacing:0.176px;;-webkit-text-stroke:0.2px #4b4d63">field-engineering</div>
<div class="t" style="left:937.29px;top:1060.15px;font-size:14px;line-height:14px;color:#4b4d63;font-weight:400;letter-spacing:0.176px;;-webkit-text-stroke:0.2px #4b4d63">Component</div>
<div class="t" style="left:1112.36px;top:1060.15px;font-size:14px;line-height:14px;color:#4b4d63;font-weight:400;letter-spacing:0.176px;;-webkit-text-stroke:0.2px #4b4d63">Service</div>
<div class="t" style="left:1286.85px;top:1060.15px;font-size:14px;line-height:14px;color:#4b4d63;font-weight:400;letter-spacing:0.176px;;-webkit-text-stroke:0.2px #4b4d63">Passed</div>
<div style="position:absolute;left:1402px;top:1066.4px;width:1px;height:1px;background:#dedee6"></div>
<div style="position:absolute;left:284px;top:1087px;width:1119px;height:2px;background:#e6e6ee"></div>
<div class="t" style="left:300.06px;top:1104.75px;font-size:14px;line-height:14px;color:#3a3b48;font-weight:400;letter-spacing:-0.177px;;-webkit-text-stroke:0.2px #3a3b48">Showing</div>
<div class="t" style="left:368.75px;top:1105.33px;font-size:15.2px;line-height:15.2px;color:#1f1f2a;font-weight:700;letter-spacing:0.487px;">31-40</div>
<div class="t" style="left:414.25px;top:1105.09px;font-size:13px;line-height:13px;color:#3a3b48;font-weight:400;letter-spacing:0.5px;;-webkit-text-stroke:0.2px #3a3b48">of</div>
<div class="t" style="left:431.27px;top:1105.33px;font-size:15.2px;line-height:15.2px;color:#1f1f2a;font-weight:700;letter-spacing:0.838px;">256</div>
<div style="position:absolute;left:1180.3px;top:1099.8px;width:24px;height:24px;background:#e6f5fd;border-radius:50%"></div>
<div class="t" style="left:1104.5px;top:1105.72px;width:40px;text-align:center;font-size:12.5px;line-height:12.5px;color:#9293ab">1</div>
<div class="t" style="left:1138.5px;top:1105.72px;width:40px;text-align:center;font-size:12.5px;line-height:12.5px;color:#9293ab">2</div>
<div class="t" style="left:1172.3px;top:1105.72px;width:40px;text-align:center;font-size:12.5px;line-height:12.5px;color:#0b78d0">3</div>
<div class="t" style="left:1206.5px;top:1105.72px;width:40px;text-align:center;font-size:12.5px;line-height:12.5px;color:#9293ab">4</div>
<div class="t" style="left:1240.3px;top:1105.72px;width:40px;text-align:center;font-size:12.5px;line-height:12.5px;color:#9293ab">5</div>
<div class="t" style="left:1274.5px;top:1105.72px;width:40px;text-align:center;font-size:12.5px;line-height:12.5px;color:#9293ab">...</div>
<div class="t" style="left:1308px;top:1105.72px;width:40px;text-align:center;font-size:12.5px;line-height:12.5px;color:#9293ab">25</div>
<svg style="position:absolute;left:1365px;top:1105px" width="9" height="14" viewBox="0 0 9 14"><path d="M1.5 1 L7 6.5 L1.5 12" fill="none" stroke="#2d8ae0" stroke-width="1.3"/></svg>
</body></html>
